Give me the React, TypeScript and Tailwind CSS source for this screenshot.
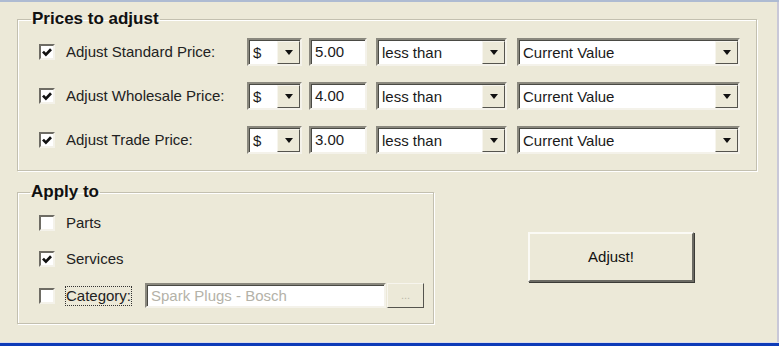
import React from "react";

const font = { fontFamily: '"Liberation Sans", Arial, sans-serif' };

function Arrow() {
  return (
    <svg width="8" height="5" viewBox="0 0 8 5">
      <path d="M0 0h8L4 5z" fill="#111" />
    </svg>
  );
}

function Sunken({
  className,
  children,
}: {
  className: string;
  children: React.ReactNode;
}) {
  return (
    <div
      className={`border-2 border-t-[#8a887e] border-l-[#8a887e] border-r-[#f4f2ea] border-b-[#f4f2ea] shrink-0 ${className}`}
    >
      <div className="h-full w-full border-t border-l border-[#4a4a44] border-r-0 border-b-0 bg-white flex items-center">
        {children}
      </div>
    </div>
  );
}

function Combo({ value, w }: { value: string; w: string }) {
  return (
    <Sunken className={`${w} h-[28px]`}>
      <span className="flex-1 pl-[3px] text-[15px] text-[#1a1a1a] leading-none">
        {value}
      </span>
      <div className="h-full w-[23px] bg-[#ece9d8] border border-t-[#f7f5ee] border-l-[#f7f5ee] border-r-[#55544e] border-b-[#55544e] flex items-center justify-center">
        <Arrow />
      </div>
    </Sunken>
  );
}

function Check({ checked }: { checked: boolean }) {
  return (
    <div className="w-[16px] h-[16px] border-2 border-t-[#6e6c64] border-l-[#6e6c64] border-r-[#f4f2ea] border-b-[#f4f2ea] bg-white flex items-center justify-center shrink-0">
      {checked && (
        <svg width="10" height="9" viewBox="0 0 10 9">
          <path d="M1 3.6l2.9 3L9 1.2" stroke="#111" strokeWidth="2.7" fill="none" />
        </svg>
      )}
    </div>
  );
}

function PriceRow({ label, amount }: { label: string; amount: string }) {
  return (
    <div className="flex items-center h-[28px]">
      <div className="w-[23px] flex justify-end shrink-0">
        <Check checked />
      </div>
      <span className="ml-[11px] w-[181px] shrink-0 text-[15px] text-[#222]">{label}</span>
      <Combo value="$" w="w-[55px]" />
      <Sunken className="ml-[7px] w-[58px] h-[28px]">
        <span className="pl-[3px] text-[15px] text-[#1a1a1a]">{amount}</span>
      </Sunken>
      <Combo value="less than" w="ml-[9px] w-[131px]" />
      <Combo value="Current Value" w="ml-[10px] w-[223px]" />
    </div>
  );
}

export default function App() {
  return (
    <div
      style={font}
      className="w-[779px] h-[346px] bg-[#ece9d8] flex flex-col border-t-2 border-[#aebbd2] overflow-hidden"
    >
      <div className="flex-1 flex flex-col border-r-2 border-[#c9c8d8]">
        <fieldset className="ml-[17px] mt-[8px] w-[740px] border border-[#c3c0b0] shadow-[inset_1px_1px_0_#fff,1px_1px_0_#fff] pl-[14px] pr-[4px] pt-[10px] pb-[16px] flex flex-col gap-[16px]">
          <legend className="-ml-[1px] px-[1px] text-[17px] font-bold text-[#111] leading-[18px]">
            Prices to adjust
          </legend>
          <PriceRow label="Adjust Standard Price:" amount="5.00" />
          <PriceRow label="Adjust Wholesale Price:" amount="4.00" />
          <PriceRow label="Adjust Trade Price:" amount="3.00" />
        </fieldset>

        <div className="flex items-start mt-[12px]">
          <fieldset className="ml-[17px] w-[417px] h-[141px] border border-[#c3c0b0] shadow-[inset_1px_1px_0_#fff,1px_1px_0_#fff] pl-[14px] pr-[4px] pt-[10px] flex flex-col gap-[12px]">
            <legend className="-ml-[2px] px-[1px] text-[17px] font-bold text-[#111] leading-[18px]">
              Apply to
            </legend>
            <div className="flex items-center h-[24px]">
              <div className="w-[23px] flex justify-end">
                <Check checked={false} />
              </div>
              <span className="ml-[11px] text-[15px] text-[#222]">Parts</span>
            </div>
            <div className="flex items-center h-[24px]">
              <div className="w-[23px] flex justify-end">
                <Check checked />
              </div>
              <span className="ml-[11px] text-[15px] text-[#222]">Services</span>
            </div>
            <div className="flex items-center h-[25px]">
              <div className="w-[23px] flex justify-end shrink-0">
                <Check checked={false} />
              </div>
              <span className="ml-[10px] w-[67px] shrink-0 whitespace-nowrap px-[1px] text-[15px] text-[#222] outline-1 outline-dotted outline-[#333] -outline-offset-1 leading-[20px]">
                Category:
              </span>
              <Sunken className="ml-[13px] w-[241px] h-[25px]">
                <span className="pl-[3px] text-[15px] text-[#b4b2a8] whitespace-nowrap">
                  Spark Plugs - Bosch
                </span>
              </Sunken>
              <div className="ml-[1px] w-[37px] h-[25px] shrink-0 border border-t-[#f7f5ee] border-l-[#f7f5ee] border-r-[#55544e] border-b-[#55544e] flex items-center justify-center text-[11px] text-[#bbb8aa]">
                ...
              </div>
            </div>
          </fieldset>
          <button className="ml-[94px] mt-[49px] w-[166px] h-[50px] bg-[#ece9d8] border-2 border-t-[#fbfaf5] border-l-[#fbfaf5] border-r-[#6b6a63] border-b-[#6b6a63] shadow-[1px_1px_0_#3a3a36] text-[15px] text-[#111]">
            Adjust!
          </button>
        </div>
      </div>
      <div className="h-[1px] bg-[#dcdcea]" />
      <div className="h-[3px] bg-[#0d3bb8]" />
    </div>
  );
}
